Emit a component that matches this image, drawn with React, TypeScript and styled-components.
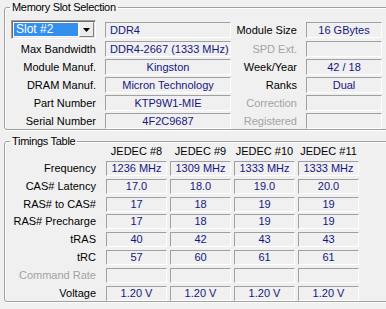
import styled, { createGlobalStyle } from "styled-components";

const GlobalStyle = createGlobalStyle`
    html, body {
        margin: 0;
        padding: 0;
        background: #f0f0f0;
        overflow: hidden;
    }
    body {
        font-family: "Liberation Sans", Arial, sans-serif;
        font-size: 11px;
        color: #000;
    }
`;

const slotRows = [
    { label: "Max Bandwidth", value: "DDR4-2667 (1333 MHz)", label2: "SPD Ext.", value2: "", off: true },
    { label: "Module Manuf.", value: "Kingston", label2: "Week/Year", value2: "42 / 18", off: false },
    { label: "DRAM Manuf.", value: "Micron Technology", label2: "Ranks", value2: "Dual", off: false },
    { label: "Part Number", value: "KTP9W1-MIE", label2: "Correction", value2: "", off: true },
    { label: "Serial Number", value: "4F2C9687", label2: "Registered", value2: "", off: true },
];

const timings = [
    { label: "Frequency", values: ["1236 MHz", "1309 MHz", "1333 MHz", "1333 MHz"] },
    { label: "CAS# Latency", values: ["17.0", "18.0", "19.0", "20.0"] },
    { label: "RAS# to CAS#", values: ["17", "18", "19", "19"] },
    { label: "RAS# Precharge", values: ["17", "18", "19", "19"] },
    { label: "tRAS", values: ["40", "42", "43", "43"] },
    { label: "tRC", values: ["57", "60", "61", "61"] },
    { label: "Command Rate", values: ["", "", "", ""], off: true },
    { label: "Voltage", values: ["1.20 V", "1.20 V", "1.20 V", "1.20 V"] },
];

const App = () => {
    return (
        <Page>
            <GlobalStyle />
            <Group>
                <Legend>Memory Slot Selection</Legend>
                <SlotGrid>
                    <Combo>
                        <ComboValue>Slot #2</ComboValue>
                        <ComboButton>
                            <svg width="7" height="4" viewBox="0 0 7 4">
                                <path d="M0 0H7L3.5 4Z" fill="#000" />
                            </svg>
                        </ComboButton>
                    </Combo>
                    <Field $align="left">DDR4</Field>
                    <Label>Module Size</Label>
                    <Field>16 GBytes</Field>
                    {slotRows.map((r) => (
                        <Row key={r.label}>
                            <Label>{r.label}</Label>
                            <Field>{r.value}</Field>
                            <Label $off={r.off}>{r.label2}</Label>
                            <Field>{r.value2}</Field>
                        </Row>
                    ))}
                </SlotGrid>
            </Group>
            <Group $gap>
                <Legend>Timings Table</Legend>
                <TimingGrid>
                    <span />
                    {["JEDEC #8", "JEDEC #9", "JEDEC #10", "JEDEC #11"].map((h) => (
                        <Head key={h}>{h}</Head>
                    ))}
                    {timings.map((t) => (
                        <Row key={t.label}>
                            <TimingLabel $off={t.off}>{t.label}</TimingLabel>
                            {t.values.map((v, i) => (
                                <Cell key={i}>{v}</Cell>
                            ))}
                        </Row>
                    ))}
                </TimingGrid>
            </Group>
        </Page>
    );
};

export default App;

const Page = styled.div`
    width: 386px;
    height: 309px;
    padding: 1px 0 0 4px;
    box-sizing: border-box;
    overflow: hidden;
`;

const Group = styled.fieldset<{ $gap?: boolean }>`
    width: 390px;
    box-sizing: border-box;
    margin: ${(p) => (p.$gap ? "5px" : "0")} 0 0 0;
    padding: ${(p) => (p.$gap ? "0 0 0 6px" : "6px 0 0 6px")};
    border: 1px solid #a0a0a0;
    border-radius: 3px;
    box-shadow: inset 1px 1px 0 #fff, 1px 1px 0 #fff;
    min-width: 0;
`;

const Legend = styled.legend`
    padding: 0 2px;
    margin-left: -1px;
    line-height: 13px;
    font-size: 11px;
    letter-spacing: -0.3px;
`;

const SlotGrid = styled.div`
    display: grid;
    grid-template-columns: 94px 126px 75px 76px;
    grid-template-rows: 19px;
    grid-auto-rows: 16px;
    row-gap: 2px;
    align-items: center;
`;

const Row = styled.div`
    display: contents;
`;

const Label = styled.div<{ $off?: boolean }>`
    text-align: right;
    padding-right: 9px;
    line-height: 16px;
    white-space: nowrap;
    color: ${(p) => (p.$off ? "#a3a3a3" : "#000")};
`;

const Field = styled.div<{ $align?: string }>`
    height: 16px;
    box-sizing: border-box;
    border-top: 1px solid #a0a0a0;
    border-left: 1px solid #a0a0a0;
    border-bottom: 1px solid #fff;
    border-right: 1px solid #fff;
    line-height: 14px;
    padding: 0 4px;
    color: #16167e;
    text-align: ${(p) => p.$align || "center"};
    white-space: nowrap;
    overflow: hidden;
`;

const Combo = styled.div`
    width: 85px;
    height: 19px;
    box-sizing: border-box;
    display: flex;
    align-items: stretch;
    background: #fff;
    border-top: 1px solid #a0a0a0;
    border-left: 1px solid #a0a0a0;
    border-bottom: 1px solid #fff;
    border-right: 1px solid #fff;
    box-shadow: inset 1px 1px 0 #696969, inset -1px -1px 0 #e3e3e3;
    padding: 2px 1px 2px 2px;
`;

const ComboValue = styled.div`
    flex: 1;
    background: #3390ec;
    color: #fff;
    font-size: 12px;
    line-height: 13px;
    padding-left: 2px;
    margin-right: 1px;
`;

const ComboButton = styled.div`
    width: 15px;
    margin: -1px 0;
    box-sizing: border-box;
    display: flex;
    align-items: center;
    justify-content: center;
    background: #ececec;
    border-top: 1px solid #f8f8f8;
    border-left: 1px solid #f8f8f8;
    border-bottom: 1px solid #808080;
    border-right: 1px solid #808080;
`;

const TimingGrid = styled.div`
    display: grid;
    grid-template-columns: 92px repeat(4, 61px);
    grid-template-rows: 13px;
    grid-auto-rows: 15px;
    column-gap: 3px;
    row-gap: 2.85px;
    margin-top: -3px;
    align-items: center;
`;

const Head = styled.div`
    text-align: center;
    line-height: 13px;
    white-space: nowrap;
`;

const TimingLabel = styled.div<{ $off?: boolean }>`
    text-align: right;
    padding-right: 7px;
    line-height: 15px;
    white-space: nowrap;
    color: ${(p) => (p.$off ? "#a3a3a3" : "#000")};
`;

const Cell = styled.div`
    height: 15px;
    box-sizing: border-box;
    border-top: 1px solid #a0a0a0;
    border-left: 1px solid #a0a0a0;
    border-bottom: 1px solid #fff;
    border-right: 1px solid #fff;
    line-height: 13px;
    color: #16167e;
    text-align: center;
    white-space: nowrap;
`;
